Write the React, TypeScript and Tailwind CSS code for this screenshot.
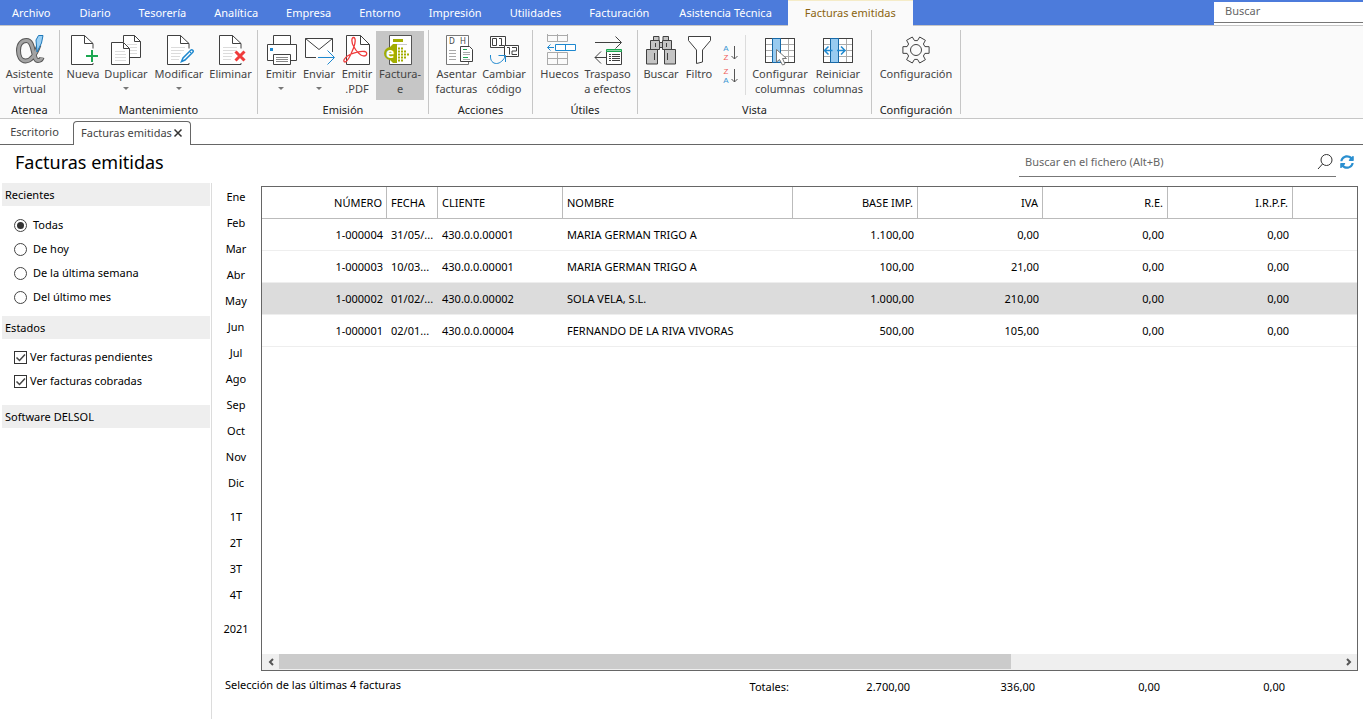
import React, { useState } from 'react';
import { FaSyncAlt } from 'react-icons/fa';

const DARK = '#404040';
const BLUE = '#1e88cf';

const Icon: React.FC<{ children: React.ReactNode }> = ({ children }) => (
  <svg width="32" height="32" viewBox="0 0 32 32" fill="none" stroke={DARK} className="shrink-0" aria-hidden="true">
    {children}
  </svg>
);

const Page = () => (
  <>
    <path d="M26 14.5V9.5L17.5 1.5H4.5V30.5H26V29" fill="#fff" />
    <path d="M17.5 1.5V9.5H26" />
  </>
);

const PageLines = () => <path stroke="#dcdcdc" d="M8 13.5h14M8 16.5h13M8 19.5h10M8 22.5h9M8 25.5h8" />;

const ALPHA = 'M25 11C21 22 17 27 11.5 27C7 27 4.5 22.5 4.5 16.5C4.5 10 8 6.5 12.5 6.5C21 6.5 18 26.5 24 26.5C26.5 26.5 27.5 25.5 28 23.5';

const AlphaIcon = () => (
  <Icon>
    <path d={ALPHA} stroke="#555" strokeWidth="5" />
    <path d={ALPHA} stroke="#a3a3a3" strokeWidth="3" />
    <path d="M22 6L24.5 1.5H29L27.5 9L23 18Z" fill="#9ad0f5" stroke="#1f78b8" />
  </Icon>
);

const NewIcon = () => (
  <Icon>
    <Page />
    <path d="M25 16v12M19 22h12" stroke="#1ba750" strokeWidth="2" />
  </Icon>
);

const CopyIcon = () => (
  <Icon>
    <path d="M13.5 8V1.5H24.5L30.5 7.5V23.5H20" fill="#fff" />
    <path d="M24.5 1.5V7.5H30.5" />
    <path d="M17 10.5h10M20 13.5h7M20 16.5h7M20 19.5h7" stroke="#dcdcdc" />
    <path d="M1.5 8.5H13.5L19.5 14.5V30.5H1.5Z" fill="#fff" />
    <path d="M13.5 8.5V14.5H19.5" />
    <path d="M5 17.5h10M5 20.5h11M5 23.5h11M5 26.5h11" stroke="#dcdcdc" />
  </Icon>
);

const EditIcon = () => (
  <Icon>
    <Page />
    <PageLines />
    <path d="M18.5 27.5L20 24L28 16C29 15 31 17 30 18L22 26Z" fill="#fff" stroke={BLUE} strokeWidth="1.5" />
    <path d="M26.5 17.5l2 2" stroke={BLUE} />
  </Icon>
);

const DeleteIcon = () => (
  <Icon>
    <Page />
    <PageLines />
    <path d="M20.5 17.5l9 9M29.5 17.5l-9 9" stroke="#ef3b3b" strokeWidth="3" />
  </Icon>
);

const PrintIcon = () => (
  <Icon>
    <path d="M8.5 10.5V1.5H25.5V10.5" fill="#fff" />
    <path d="M8.5 26.5H2.5V10.5H31.5V26.5H25.5" fill="#fff" />
    <path d="M8.5 20.5H25.5V30.5H8.5Z" fill="#fff" />
    <path d="M11 23.5h12M11 25.5h12M11 27.5h12" stroke="#888" />
    <path d="M5 14h3v3h-3z" fill={BLUE} stroke="none" />
  </Icon>
);

const MailIcon = () => (
  <Icon>
    <path d="M13 23.5H2.5V4.5H29.5V18" fill="#fff" />
    <path d="M2.5 4.5L16 15.5L29.5 4.5" />
    <path d="M15 23.5H31M24.5 16.5L31.5 23.5L24.5 30.5" stroke={BLUE} />
  </Icon>
);

const PdfIcon = () => (
  <Icon>
    <path d="M5.5 1.5H19.5L28.5 10.5V30.5H5.5Z" fill="#fff" />
    <path d="M19.5 1.5V10.5H28.5" />
    <path
      d="M13 13C10 8 10.5 3.500 12.5 3.5C15 3.5 14.5 9 12.5 14C10.500 19 7 28 4 28C1.5 28 3 23 9 20.5C14 18.5 20 17 23.5 17.5C27 18 26 22 23 22C19 22 14.5 16 13 13Z"
      stroke="#ef3b3b"
      strokeWidth="1.3"
    />
  </Icon>
);

const FacturaeIcon = () => (
  <Icon>
    <path d="M5.5 1.5H27.5V30.5H5.5Z" fill="#fff" stroke="#555" />
    <path d="M9 5h10v3H9z" fill="#a2ad00" stroke="none" />
    <path d="M9 10.5h14" stroke="#c9c9c9" />
    <path d="M5 14L9 10H13V29H9L5 25Z" fill="#a2ad00" stroke="none" />
    <circle cx="6.5" cy="19.5" r="6.5" fill="#a2ad00" stroke="none" />
    <path d="M14 14.5h6M14 17.5h9M14 20.5h11M14 23.5h9M14 26.5h6" stroke="#a2ad00" strokeWidth="2" strokeDasharray="2 1" />
    <text x="2" y="24" fill="#fff" stroke="none" className="text-[14px] font-bold">e</text>
  </Icon>
);

const LedgerIcon = () => (
  <Icon>
    <path d="M5.5 1.5H27.5V30.5H5.5Z" fill="#fff" stroke="#777" />
    <text x="8" y="10" fill="#444" stroke="none" className="text-[8px]">D</text>
    <text x="19" y="10" fill="#444" stroke="none" className="text-[8px]">H</text>
    <path d="M8 16.5h7M8 19.5h7M8 22.5h7M8 25.5h7" stroke="#aaa" />
    <path d="M19.5 12.5H28.5L31.5 15.5V27.5H19.5Z" fill="#fff" />
    <path d="M22 15.5h4M22 23.5h5" stroke="#1ba750" />
    <path d="M22 18.5h7M22 20.5h7M22 25.5h7" stroke="#aaa" />
  </Icon>
);

const CodeIcon = () => (
  <Icon>
    <path d="M2.5 2.5H17.5V13.5H2.5Z" fill="#fff" />
    <path d="M16.5 11.5H30.5V22.5H16.5Z" fill="#fff" />
    <path d="M4.5 4.5h4v7h-4zM11 4.5h2.5v7M11 11.5h5" />
    <path d="M19 13.5h2.5v7M24 13.5h4.5v3.5h-4.5v3.5h5" />
    <path d="M2.5 21C2 27 5 29.5 8.5 29.5C12 29.5 16 26 17.5 21.5M10.5 21.5H17.5V28" stroke={BLUE} />
  </Icon>
);

const GapsIcon = () => (
  <Icon>
    <path d="M3.5 0V7.5H23.5V0M3.5 1.5H23.5M13.5 0V7.5" stroke="#aaa" />
    <path d="M11.5 10.5H31.5V16.5H11.5ZM21.5 10.5V16.5" fill="#fff" stroke={BLUE} />
    <path d="M10 13.5H3.5M6.5 10.5L3.5 13.5L6.5 16.5" stroke={BLUE} />
    <path d="M3.5 31V18.5H23.5V31M3.5 24.5H23.5M3.5 30.5H23.5M13.5 18.5V31" stroke="#aaa" />
  </Icon>
);

const TransferIcon = () => (
  <Icon>
    <path d="M3 8.5H29M23.5 2.5L29.5 8.5L23.5 14.5" />
    <path d="M14 23.5H3M9 17.5L3 23.5L9 29.5" />
    <path d="M14.5 17.5H29.5V30.5H14.5Z" fill="#fff" />
    <path d="M14.5 15.5H29.5V17.5H14.5Z" fill="#8fd6a8" stroke="#1ba750" />
    <path d="M17 20.5h2M20 20.5h8M17 22.5h2M20 22.5h8M17 24.5h2M20 24.5h8M17 26.5h2M20 26.5h8" />
  </Icon>
);

const BinocularsIcon = () => (
  <Icon>
    <g fill="#c4c4c4">
      <path d="M13.5 8.5h5v5h-5z" />
      <path d="M8.5 2.5h5.5v4H8.5zM18 2.5h5.5v4H18z" />
      <path d="M5.5 6.5h9v9h-9zM17.5 6.5h9v9h-9z" />
      <path d="M1.5 15.5h11v14.5h-11zM19.5 15.5h11v14.5h-11z" />
    </g>
    <path d="M9.5 19v7M22.5 19v7M10.5 9v4M21.5 9v4" />
  </Icon>
);

const FunnelIcon = () => (
  <Icon>
    <path d="M5.5 2.5H27.5V6.5L19.5 16V28L13.5 29.5V16L5.5 6.5Z" fill="#fff" />
  </Icon>
);

const SortButton: React.FC<{ label: string; descending?: boolean }> = ({ label, descending }) => (
  <button aria-label={label} className="flex items-center font-['Liberation_Sans',sans-serif] text-[8px] leading-[9px]">
    <span className={`flex w-[7px] items-center ${descending ? 'flex-col-reverse' : 'flex-col'}`}>
      <span className="text-[#3b96d2]">A</span>
      <span className="text-[#ef5b5b]">Z</span>
    </span>
    <svg width="8" height="16" viewBox="0 0 8 16" fill="none" stroke="#555">
      <path d="M4.5 1V14M1.5 11L4.5 14L7.5 11" />
    </svg>
  </button>
);

const Columns = () => (
  <>
    <path d="M1.5 4.5H30.5V28.5H1.5Z" fill="#fff" />
    <path d="M2 10.5H30M2 16.5H30M2 22.5H30M24.5 5V28" stroke="#aaa" />
    <path d="M1.5 4.5H30.5V28.5H1.5Z" />
    <path d="M8.5 4.5H16.5V28.5H8.5Z" fill="#98cbf0" stroke="#1669a8" />
  </>
);

const ColumnsIcon = () => (
  <Icon>
    <Columns />
    <path d="M12.5 15.5V28L15.5 25.5L18.5 31L21 30L18.5 24.5H22.5Z" fill="#fff" stroke="#777" />
  </Icon>
);

const ResetColumnsIcon = () => (
  <Icon>
    <Columns />
    <path d="M3 16.5H10.5M6.5 12.5L2.5 16.5L6.5 20.5M15 16.5H22.5M19 12.5L23 16.5L19 20.5" stroke={BLUE} strokeWidth="1.5" />
  </Icon>
);

// six teeth, one each 60 degrees
const gearPoints = Array.from({ length: 6 }, (_, i) =>
  [[-21, 9.5], [-14, 13.5], [14, 13.5], [21, 9.5]].map(([deg, r]) => {
    const a = ((i * 60 + deg) * Math.PI) / 180;
    return `${(16 + r * Math.cos(a)).toFixed(1)},${(16 + r * Math.sin(a)).toFixed(1)}`;
  }).join(' ')
).join(' ');

const GearIcon = () => (
  <Icon>
    <polygon points={gearPoints} strokeLinejoin="round" />
    <circle cx="16" cy="16" r="5.5" />
  </Icon>
);

const menus = [
  { label: 'Archivo', pad: 'pl-3 pr-[15px]' },
  { label: 'Diario', pad: 'px-[14px]' },
  { label: 'Tesorería', pad: 'px-[14px]' },
  { label: 'Analítica', pad: 'px-[14px]' },
  { label: 'Empresa', pad: 'px-[14px]' },
  { label: 'Entorno', pad: 'px-[14px]' },
  { label: 'Impresión', pad: 'px-[14px]' },
  { label: 'Utilidades', pad: 'px-[14px]' },
  { label: 'Facturación', pad: 'px-[14px]' },
  { label: 'Asistencia Técnica', pad: 'px-4' }
];

type Action = { label: string; icon?: React.FC; width: string; arrow?: boolean; active?: boolean; kind?: 'sort' };

const groups: { title: string; actions: Action[] }[] = [
  { title: 'Atenea', actions: [{ label: 'Asistente\nvirtual', icon: AlphaIcon, width: 'w-[51px]' }] },
  {
    title: 'Mantenimiento',
    actions: [
      { label: 'Nueva', icon: NewIcon, width: 'w-[38px]' },
      { label: 'Duplicar', icon: CopyIcon, width: 'w-12', arrow: true },
      { label: 'Modificar', icon: EditIcon, width: 'w-[58px]', arrow: true },
      { label: 'Eliminar', icon: DeleteIcon, width: 'w-[45px]' }
    ]
  },
  {
    title: 'Emisión',
    actions: [
      { label: 'Emitir', icon: PrintIcon, width: 'w-[38px]', arrow: true },
      { label: 'Enviar', icon: MailIcon, width: 'w-[38px]', arrow: true },
      { label: 'Emitir\n.PDF', icon: PdfIcon, width: 'w-[38px]' },
      { label: 'Factura-\ne', icon: FacturaeIcon, width: 'w-12', active: true }
    ]
  },
  {
    title: 'Acciones',
    actions: [
      { label: 'Asentar\nfacturas', icon: LedgerIcon, width: 'w-[47px]' },
      { label: 'Cambiar\ncódigo', icon: CodeIcon, width: 'w-12' }
    ]
  },
  {
    title: 'Útiles',
    actions: [
      { label: 'Huecos', icon: GapsIcon, width: 'w-[45px]' },
      { label: 'Traspaso\na efectos', icon: TransferIcon, width: 'w-[51px]' }
    ]
  },
  {
    title: 'Vista',
    actions: [
      { label: 'Buscar', icon: BinocularsIcon, width: 'w-[38px]' },
      { label: 'Filtro', icon: FunnelIcon, width: 'w-[38px]' },
      { label: 'Ordenar', width: 'w-6', kind: 'sort' },
      { label: 'Configurar\ncolumnas', icon: ColumnsIcon, width: 'w-[58px]' },
      { label: 'Reiniciar\ncolumnas', icon: ResetColumnsIcon, width: 'w-[58px]' }
    ]
  },
  { title: 'Configuración', actions: [{ label: 'Configuración', icon: GearIcon, width: 'w-20' }] }
];

const periods = [
  ['Ene', 'Feb', 'Mar', 'Abr', 'May', 'Jun', 'Jul', 'Ago', 'Sep', 'Oct', 'Nov', 'Dic'],
  ['1T', '2T', '3T', '4T'],
  ['2021']
];

const recents = ['Todas', 'De hoy', 'De la última semana', 'Del último mes'];
const states = ['Ver facturas pendientes', 'Ver facturas cobradas'];

const columns = [
  { title: 'NÚMERO', width: 'w-[125px]', right: true },
  { title: 'FECHA', width: 'w-[51px]' },
  { title: 'CLIENTE', width: 'w-[125px]' },
  { title: 'NOMBRE', width: 'w-[230px]' },
  { title: 'BASE IMP.', width: 'w-[125px]', right: true },
  { title: 'IVA', width: 'w-[125px]', right: true },
  { title: 'R.E.', width: 'w-[125px]', right: true },
  { title: 'I.R.P.F.', width: 'w-[125px]', right: true }
];

const invoices = [
  ['1-000004', '31/05/...', '430.0.0.00001', 'MARIA GERMAN TRIGO A', '1.100,00', '0,00', '0,00', '0,00'],
  ['1-000003', '10/03...', '430.0.0.00001', 'MARIA GERMAN TRIGO A', '100,00', '21,00', '0,00', '0,00'],
  ['1-000002', '01/02/...', '430.0.0.00002', 'SOLA VELA, S.L.', '1.000,00', '210,00', '0,00', '0,00'],
  ['1-000001', '02/01...', '430.0.0.00004', 'FERNANDO DE LA RIVA VIVORAS', '500,00', '105,00', '0,00', '0,00']
];

const totals = ['2.700,00', '336,00', '0,00', '0,00'];

const RibbonButton: React.FC<{ action: Action }> = ({ action }) => {
  if (action.kind === 'sort') {
    return (
      <>
        <div className="flex w-6 flex-col items-center gap-[5px] pt-[13px]">
          <SortButton label="Orden ascendente" />
          <SortButton label="Orden descendente" descending />
        </div>
        <div className="ml-[3px] mr-[5px] mt-1 h-[60px] border-l border-[#dcdcdc]" />
      </>
    );
  }
  const ActionIcon = action.icon!;
  return (
    <button className={`${action.width} flex h-[69px] flex-col items-center pt-[3px] text-[#444] ${action.active ? 'bg-[#c6c6c6]' : 'hover:bg-[#e5e5e5]'}`}>
      <ActionIcon />
      <span className="whitespace-pre text-center leading-[15px]">{action.label}</span>
      {action.arrow && <span className="mt-1.5 border-x-[3px] border-t-[3px] border-x-transparent border-t-[#777]" />}
    </button>
  );
};

const PanelTitle: React.FC<{ children: React.ReactNode }> = ({ children }) => (
  <h2 className="flex h-[23px] items-center bg-[#eee] px-[3px]">{children}</h2>
);

export default function App() {
  const [recent, setRecent] = useState('Todas');
  const [selected, setSelected] = useState('1-000002');

  return (
    <div className="flex min-h-screen flex-col bg-white font-['Noto_Sans',sans-serif] text-[11px] leading-4 text-black">
      {/* Menu bar */}
      <nav className="flex h-[26px] border-b border-[#c6c6c6] bg-[#4c7bdb] text-white">
        {menus.map((menu) => (
          <button key={menu.label} className={`whitespace-nowrap ${menu.pad}`}>{menu.label}</button>
        ))}
        <button className="-mb-px h-[26px] whitespace-nowrap border-t border-[#f5ecc8] bg-[#fafafa] px-[17px] pb-0.5 text-[#8a6410]">Facturas emitidas</button>
        <div className="ml-auto mt-0.5 w-[149px] bg-white">
          <input aria-label="Buscar" placeholder="Buscar" className="h-[21px] w-full border-b border-[#777] px-[11px] pb-1 outline-none placeholder:text-[#666]" />
        </div>
      </nav>

      {/* Ribbon */}
      <div className="flex h-[93px] border-b border-[#c6c6c6] bg-[#fafafa] py-1">
        {groups.map((group) => (
          <section key={group.title} className="flex flex-col border-r border-[#c6c6c6] px-1 pt-px">
            <div className="flex">
              {group.actions.map((action) => (
                <RibbonButton key={action.label} action={action} />
              ))}
            </div>
            <h2 className="mt-0.5 text-center text-[#222]">{group.title}</h2>
          </section>
        ))}
      </div>

      {/* Open documents */}
      <div className="flex h-[26px] items-end border-b border-[#666] text-[#444]">
        <button className="h-6 w-[73px] pr-1 text-center">Escritorio</button>
        <div className="-mb-px flex h-6 items-center gap-px rounded-t border border-b-0 border-[#666] bg-white px-[7px] pb-0.5">
          <button>Facturas emitidas</button>
          <button aria-label="Cerrar">
            <svg width="10" height="10" viewBox="0 0 10 10" stroke="#333" strokeWidth="1.5"><path d="M1.5 1.5l7 7M8.5 1.5l-7 7" /></svg>
          </button>
        </div>
      </div>

      {/* Title */}
      <div className="flex h-[38px] items-center justify-between pb-1 pl-[15px] pr-[9px]">
        <h1 className="text-[18px] leading-6">Facturas emitidas</h1>
        <div className="flex items-center gap-1">
          <div className="flex h-[30px] w-[317px] items-center border-b border-[#777] pr-[3px]">
            <input aria-label="Buscar en el fichero" placeholder="Buscar en el fichero (Alt+B)" className="min-w-0 flex-1 px-1.5 outline-none placeholder:text-[#666]" />
            <svg width="16" height="16" viewBox="0 0 16 16" fill="none" stroke="#333"><circle cx="9.5" cy="6" r="5.5" /><path d="M5.5 10L1 15" /></svg>
          </div>
          <button aria-label="Actualizar"><FaSyncAlt className="h-[14px] w-[14px] text-[#2a8fd0]" /></button>
        </div>
      </div>

      <div className="flex flex-1">
        {/* Filters */}
        <aside className="w-[212px] shrink-0 border-r border-[#dcdcdc] pl-0.5 pr-px">
          <PanelTitle>Recientes</PanelTitle>
          <div className="flex flex-col px-3 py-[7px]">
            {recents.map((item) => (
              <label key={item} className="flex h-6 items-center gap-1.5">
                <input
                  type="radio"
                  name="recent"
                  checked={recent === item}
                  onChange={() => setRecent(item)}
                  className="flex h-[13px] w-[13px] appearance-none items-center justify-center rounded-full border border-[#444] checked:before:h-[7px] checked:before:w-[7px] checked:before:rounded-full checked:before:bg-[#333] checked:before:content-['']"
                />
                {item}
              </label>
            ))}
          </div>
          <PanelTitle>Estados</PanelTitle>
          <div className="flex flex-col px-3 pb-3 pt-[6px]">
            {states.map((item) => (
              <label key={item} className="flex h-6 items-center gap-[3px]">
                <span className="relative h-[13px] w-[13px]">
                  <input type="checkbox" defaultChecked className="peer block h-[13px] w-[13px] appearance-none border border-[#333]" />
                  <svg width="13" height="13" viewBox="0 0 13 13" fill="none" stroke="#444" strokeWidth="1.5" className="pointer-events-none absolute inset-0 hidden peer-checked:block">
                    <path d="M2.5 6.5l3 3l5.5-6" />
                  </svg>
                </span>
                {item}
              </label>
            ))}
          </div>
          <PanelTitle>Software DELSOL</PanelTitle>
        </aside>

        <div className="flex min-w-0 flex-1 flex-col pr-[5px]">
          <div className="flex flex-1">
            {/* Periods */}
            <div className="flex w-[49px] shrink-0 flex-col gap-2 pr-px pt-px">
              {periods.map((list) => (
                <div key={list[0]} className="flex flex-col">
                  {list.map((period) => (
                    <button key={period} className="h-[26px] text-center">{period}</button>
                  ))}
                </div>
              ))}
            </div>

            {/* Invoices */}
            <div className="mt-[3px] flex min-w-0 flex-1 flex-col border border-[#666]">
              <div className="flex-1 overflow-hidden">
                <table className="w-full table-fixed border-separate border-spacing-0">
                  <thead>
                    <tr className="h-8">
                      {columns.map((col) => (
                        <th key={col.title} className={`${col.width} border-b border-r border-[#bbb] px-1 font-normal ${col.right ? 'text-right' : 'text-left'}`}>{col.title}</th>
                      ))}
                      <th className="border-b border-[#bbb]" />
                    </tr>
                  </thead>
                  <tbody>
                    {invoices.map((row) => (
                      <tr key={row[0]} onClick={() => setSelected(row[0])} className={`h-8 ${selected === row[0] ? 'bg-[#dcdcdc]' : ''}`}>
                        {row.map((cell, i) => (
                          <td key={columns[i].title} className={`whitespace-nowrap border-b border-[#eee] px-1 ${columns[i].right ? 'text-right' : ''}`}>{cell}</td>
                        ))}
                        <td className="border-b border-[#eee]" />
                      </tr>
                    ))}
                  </tbody>
                </table>
              </div>
              <div className="flex h-4 bg-[#efefef]">
                <button aria-label="Desplazar a la izquierda" className="flex w-[17px] items-center justify-center">
                  <svg width="8" height="8" viewBox="0 0 8 8" fill="none" stroke="#555" strokeWidth="2"><path d="M6 1L3 4L6 7" /></svg>
                </button>
                <div className="flex-1"><div className="h-[15px] w-[69%] bg-[#cbcbcb]" /></div>
                <button aria-label="Desplazar a la derecha" className="flex w-[17px] items-center justify-center">
                  <svg width="8" height="8" viewBox="0 0 8 8" fill="none" stroke="#555" strokeWidth="2"><path d="M2 1L5 4L2 7" /></svg>
                </button>
              </div>
            </div>
          </div>

          {/* Totals */}
          <footer className="flex h-12 pl-[13px] pr-[69px] pt-1.5">
            <span>Selección de las últimas 4 facturas</span>
            <div className="ml-auto flex pt-0.5">
              <span>Totales:</span>
              {totals.map((total, i) => (
                <span key={columns[i + 4].title} className="w-[125px] pr-1 text-right">{total}</span>
              ))}
            </div>
          </footer>
        </div>
      </div>
    </div>
  );
}
